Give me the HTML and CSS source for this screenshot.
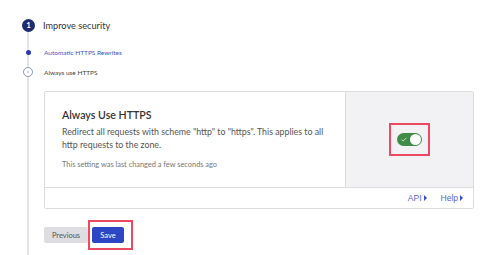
FILE: index.html
```html
<!DOCTYPE html>
<html>
<head>
<meta charset="utf-8">
<link rel="stylesheet" href="styles.css">
</head>
<body>
<div class="page">
  <div class="step-head">
    <span class="step-num">1</span>
    <span class="step-title">Improve security</span>
  </div>
  <div class="step-body">
    <div class="substep done">
      <span class="marker dot"></span>
      <span class="sub-label">Automatic HTTPS Rewrites</span>
    </div>
    <div class="substep current">
      <span class="marker ring"><span class="ring-dot"></span></span>
      <span class="sub-label">Always use HTTPS</span>
    </div>
    <div class="card">
      <div class="card-main">
        <div class="card-text">
          <h2 class="card-title">Always Use HTTPS</h2>
          <p class="card-desc">Redirect all requests with scheme "http" to "https". This applies to all http requests to the zone.</p>
          <p class="card-note">This setting was last changed a few seconds ago</p>
        </div>
        <div class="card-control">
          <div class="highlight">
            <div class="toggle">
              <svg class="check" width="6" height="5" viewBox="0 0 6 5"><path d="M0.6 2.6 L2.2 4 L5.4 0.8" fill="none" stroke="#cfe8d2" stroke-width="0.9"/></svg>
              <span class="knob"></span>
            </div>
          </div>
        </div>
      </div>
      <div class="card-foot">
        <a class="foot-link">API<span class="tri"></span></a>
        <a class="foot-link">Help<span class="tri"></span></a>
      </div>
    </div>
    <div class="actions">
      <button class="btn btn-prev">Previous</button>
      <div class="highlight hl-btn">
        <button class="btn btn-save">Save</button>
      </div>
    </div>
  </div>
</div>
</body>
</html>
```
FILE: styles.css
```css
html, body {
  margin: 0;
  padding: 0;
  background: #fff;
  font-family: Lato, "Open Sans", sans-serif;
}
.page {
  padding-top: 18px;
  height: 237px;
  overflow: hidden;
  display: flex;
  flex-direction: column;
}
.step-head {
  display: flex;
  align-items: center;
  margin-left: 22px;
  height: 14px;
}
.step-num {
  width: 13px;
  height: 13px;
  border-radius: 50%;
  background: #1e2b6e;
  color: #fff;
  font-size: 8px;
  font-weight: 700;
  display: flex;
  align-items: center;
  justify-content: center;
}
.step-title {
  margin-left: 8px;
  font-size: 9.2px;
  color: #333;
}
.step-body {
  margin-left: 27px;
  border-left: 2px solid #e4e4e6;
  padding-left: 15px;
  padding-top: 14px;
  flex: 1;
}
.substep {
  position: relative;
  display: flex;
  align-items: center;
  height: 12px;
}
.substep.current {
  margin-top: 8px;
}
.marker {
  position: absolute;
  box-sizing: border-box;
  border-radius: 50%;
}
.dot {
  width: 5px;
  height: 5px;
  left: -18.5px;
  background: #2b3cb0;
}
.ring {
  width: 10px;
  height: 10px;
  left: -21px;
  border: 1px solid #8d97c9;
  background: #fff;
  display: flex;
  align-items: center;
  justify-content: center;
}
.ring-dot {
  width: 2px;
  height: 2px;
  border-radius: 50%;
  background: #b8bedf;
}
.sub-label {
  font-size: 6.5px;
  color: #444;
}
.done .sub-label {
  color: #4153c2;
}
.card {
  margin-top: 13px;
  width: 430px;
  box-sizing: border-box;
  border: 1px solid #dcdcdf;
  border-radius: 2px;
}
.card-main {
  display: flex;
  height: 95px;
  border-bottom: 1px solid #dcdcdf;
}
.card-text {
  flex: 1;
  padding: 15px 0 0 17px;
}
.card-title {
  margin: 0;
  font-size: 10.6px;
  font-weight: 600;
  line-height: 16px;
  color: #333;
}
.card-desc {
  margin: 2px 0 0;
  font-size: 8.8px;
  line-height: 13px;
  color: #555;
  width: 262px;
}
.card-note {
  margin: 9px 0 0;
  font-size: 7.4px;
  line-height: 10px;
  color: #777;
}
.card-control {
  width: 127px;
  background: #f2f1f4;
  border-left: 1px solid #dcdcdf;
  display: flex;
  align-items: center;
  justify-content: center;
}
.highlight {
  border: 2px solid #ec4a63;
  padding: 8px 6px;
}
.toggle {
  width: 25px;
  height: 13px;
  border-radius: 7px;
  background: #3f8c46;
  position: relative;
  display: flex;
  align-items: center;
}
.check {
  margin-left: 4px;
}
.knob {
  position: absolute;
  right: 1px;
  top: 1px;
  width: 11px;
  height: 11px;
  border-radius: 50%;
  background: #fff;
}
.card-foot {
  height: 20px;
  display: flex;
  justify-content: flex-end;
  align-items: center;
  gap: 14px;
  padding-right: 10px;
}
.foot-link {
  font-family: "Liberation Sans", Arial, sans-serif;
  font-size: 8.5px;
  color: #5566d0;
  display: flex;
  align-items: center;
}
.tri {
  margin-left: 2px;
  width: 0;
  height: 0;
  border-top: 3px solid transparent;
  border-bottom: 3px solid transparent;
  border-left: 3.5px solid #3a4dc8;
}
.actions {
  display: flex;
  align-items: center;
  margin-top: 11px;
}
.btn {
  font-family: Lato, "Open Sans", sans-serif;
  font-size: 7.5px;
  border: none;
  border-radius: 2px;
  height: 16px;
  padding: 0;
  cursor: pointer;
}
.btn-prev {
  width: 44px;
  background: #dedde1;
  color: #555;
}
.hl-btn {
  padding: 5px 7px 5px 2px;
}
.btn-save {
  width: 32px;
  background: #2c46c4;
  color: #fff;
  display: block;
}
```
